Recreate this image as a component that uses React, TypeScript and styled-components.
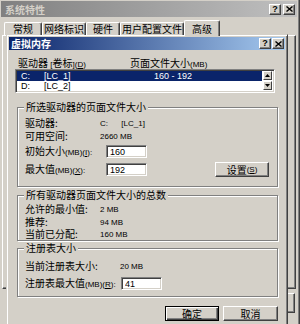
import React from 'react';
import styled, { createGlobalStyle } from 'styled-components';

const FACE = '#d4d0c8';
const SHADOW = '#808080';
const DARK = '#404040';

const GlobalStyle = createGlobalStyle`
  html, body { margin: 0; padding: 0; background: ${FACE}; }
  body {
    font-family: "Noto Sans CJK SC", "Liberation Sans", sans-serif;
    font-size: 10px;
    color: #000;
  }
`;

const Screen = styled.div`
  position: relative;
  width: 300px;
  height: 324px;
  overflow: hidden;
  background: ${FACE};
  display: flex;
  flex-direction: column;
  box-sizing: border-box;
  border-right: 1px solid ${DARK};
  box-shadow: inset -1px 0 0 ${SHADOW};
`;

const TitleBar = styled.div<{ $active?: boolean }>`
  display: flex;
  align-items: center;
  height: ${p => (p.$active ? 13 : 16)}px;
  padding: 0 1px 0 ${p => (p.$active ? 2 : 4)}px;
  background: ${p =>
    p.$active
      ? 'linear-gradient(90deg, #0a246a, #a6caf0)'
      : 'linear-gradient(90deg, #808080, #c0c0c0)'};
  color: ${p => (p.$active ? '#fff' : '#d4d0c8')};
  font-weight: bold;
  line-height: 13px;
`;

const OuterTitle = styled(TitleBar)`
  margin: 1px 2px 0 1px;
`;

const TitleText = styled.span`
  flex: 1;
  white-space: nowrap;
`;

const CaptionButton = styled.div<{ $gap?: number }>`
  width: 12px;
  height: 11px;
  margin-left: ${p => p.$gap ?? 1}px;
  box-sizing: border-box;
  background: ${FACE};
  border: 1px solid;
  border-color: #fff ${DARK} ${DARK} #fff;
  box-shadow: inset -1px -1px 0 ${SHADOW};
  display: flex;
  align-items: center;
  justify-content: center;
  font-family: "Liberation Sans", sans-serif;
  font-size: 9px;
  font-weight: bold;
  color: #000;
  line-height: 9px;
`;

const TabStrip = styled.div`
  display: flex;
  align-items: flex-end;
  height: 15px;
  margin-top: 3px;
  padding-left: 4px;
`;

const Tab = styled.div<{ $w: number; $active?: boolean }>`
  position: relative;
  width: ${p => p.$w}px;
  height: ${p => (p.$active ? 16 : 13)}px;
  margin-bottom: ${p => (p.$active ? -1 : 0)}px;
  box-sizing: border-box;
  background: ${FACE};
  border-top: 1px solid #fff;
  border-left: 1px solid #fff;
  border-right: 1px solid ${DARK};
  border-radius: 2px 2px 0 0;
  box-shadow: inset -1px 0 0 ${SHADOW};
  display: flex;
  align-items: center;
  justify-content: center;
  white-space: nowrap;
  line-height: 12px;
  z-index: ${p => (p.$active ? 2 : 1)};
`;

const TabPanel = styled.div`
  height: 254px;
  margin: 0 3px 0 2px;
  box-sizing: border-box;
  border: 1px solid;
  border-color: #fff ${DARK} ${DARK} #fff;
  box-shadow: inset -1px -1px 0 ${SHADOW};
`;

const OuterButtons = styled.div`
  display: flex;
  justify-content: flex-end;
  padding: 4px 4px 0 0;
`;

const PushButton = styled.div<{ $w: number; $default?: boolean }>`
  width: ${p => p.$w}px;
  height: 15px;
  box-sizing: border-box;
  background: ${FACE};
  border: 1px solid;
  border-color: ${p => (p.$default ? '#000' : `#fff ${DARK} ${DARK} #fff`)};
  box-shadow: ${p =>
    p.$default
      ? `inset 1px 1px 0 #fff, inset -1px -1px 0 ${DARK}, inset -2px -2px 0 ${SHADOW}`
      : `inset -1px -1px 0 ${SHADOW}`};
  display: flex;
  align-items: center;
  justify-content: center;
  white-space: nowrap;
  line-height: 12px;
`;

const OuterPushButton = styled(PushButton)`
  height: 20px;
`;

const Dialog = styled.div`
  position: absolute;
  left: 6px;
  top: 34px;
  width: 282px;
  height: 300px;
  box-sizing: border-box;
  padding: 2px;
  background: ${FACE};
  border: 1px solid;
  border-color: ${FACE} ${DARK} ${DARK} ${FACE};
  box-shadow: inset 1px 1px 0 #fff, inset -1px -1px 0 ${SHADOW};
`;

const Content = styled.div`
  display: flex;
  flex-direction: column;
  padding: 7px 7px 0 6px;
`;

const Latin = styled.span`
  font-family: "Liberation Sans", sans-serif;
  font-size: 8px;
`;

const HeaderRow = styled.div`
  display: grid;
  grid-template-columns: 112px 1fr;
  height: 12px;
  padding-left: 3px;
  line-height: 12px;
  white-space: nowrap;
`;

const ListBox = styled.div`
  display: flex;
  width: 260px;
  height: 24px;
  box-sizing: border-box;
  background: #fff;
  border: 1px solid;
  border-color: ${SHADOW} #fff #fff ${SHADOW};
  box-shadow: inset 1px 1px 0 ${DARK}, inset -1px -1px 0 ${FACE};
  padding: 1px 2px 1px 1px;
`;

const ListRows = styled.div`
  flex: 1;
  display: flex;
  flex-direction: column;
`;

const ListRow = styled.div<{ $selected?: boolean }>`
  display: grid;
  grid-template-columns: 23px 110px 1fr;
  height: 10px;
  padding-left: 4px;
  line-height: 10px;
  font-family: "Liberation Sans", sans-serif;
  font-size: 9px;
  background: ${p => (p.$selected ? '#0a246a' : 'transparent')};
  color: ${p => (p.$selected ? '#fff' : '#000')};
`;

const ScrollColumn = styled.div`
  width: 9px;
  display: flex;
  flex-direction: column;
  gap: 1px;
  margin-left: 1px;
`;

const ScrollButton = styled.div`
  height: 9px;
  box-sizing: border-box;
  background: ${FACE};
  border: 1px solid;
  border-color: #fff ${DARK} ${DARK} #fff;
  display: flex;
  align-items: center;
  justify-content: center;
`;

const Group = styled.div<{ $mt: number; $pt: number; $pb: number }>`
  position: relative;
  margin: ${p => p.$mt}px 0 0 2px;
  padding: ${p => p.$pt}px 0 ${p => p.$pb}px 7px;
  border: 1px solid ${SHADOW};
  box-shadow: inset 1px 1px 0 #fff, 1px 1px 0 #fff;
`;

const Legend = styled.span`
  position: absolute;
  left: 6px;
  top: -7px;
  padding: 0 2px;
  background: ${FACE};
  line-height: 12px;
  white-space: nowrap;
`;

const Row = styled.div<{ $h: number; $mt?: number }>`
  display: flex;
  align-items: center;
  height: ${p => p.$h}px;
  margin-top: ${p => p.$mt ?? 0}px;
  line-height: 11px;
`;

const Label = styled.span<{ $w: number }>`
  width: ${p => p.$w}px;
  flex: none;
  white-space: nowrap;
`;

const Value = styled.span`
  white-space: nowrap;
`;

const Field = styled.input`
  width: 41px;
  height: 13px;
  box-sizing: border-box;
  margin: 0;
  padding: 0 0 0 3px;
  background: #fff;
  border: 1px solid;
  border-color: ${SHADOW} #fff #fff ${SHADOW};
  box-shadow: inset 1px 1px 0 ${DARK}, inset -1px -1px 0 ${FACE};
  font-family: "Liberation Sans", sans-serif;
  font-size: 9px;
  color: #000;
  outline: none;
`;

const SetButton = styled(PushButton)`
  margin: 0 8px 0 auto;
`;

const ButtonRow = styled.div`
  display: flex;
  justify-content: flex-end;
  gap: 4px;
  margin-top: 9px;
`;

const CloseGlyph = () => (
  <svg width="7" height="6" viewBox="0 0 7 6">
    <path d="M0.5 0.5 L6.5 5.5 M6.5 0.5 L0.5 5.5" stroke="#000" strokeWidth="1.4" />
  </svg>
);

const Arrow = ({ up }: { up?: boolean }) => (
  <svg width="5" height="3" viewBox="0 0 5 3">
    <path d={up ? 'M0 3 L2.5 0 L5 3 Z' : 'M0 0 L5 0 L2.5 3 Z'} fill="#000" />
  </svg>
);

const tabs = [
  { label: '常规', w: 38 },
  { label: '网络标识', w: 44 },
  { label: '硬件', w: 34 },
  { label: '用户配置文件', w: 64 },
  { label: '高级', w: 36, active: true },
];

export default function App() {
  return (
    <>
      <GlobalStyle />
      <Screen>
        <OuterTitle>
          <TitleText>系统特性</TitleText>
          <CaptionButton>?</CaptionButton>
          <CaptionButton $gap={2}><CloseGlyph /></CaptionButton>
          <span style={{ width: 1 }} />
        </OuterTitle>
        <TabStrip>
          {tabs.map(t => (
            <Tab key={t.label} $w={t.w} $active={t.active}>{t.label}</Tab>
          ))}
        </TabStrip>
        <TabPanel />
        <OuterButtons>
          <OuterPushButton $w={60}>应用</OuterPushButton>
        </OuterButtons>

        <Dialog>
          <TitleBar $active>
            <TitleText>虚拟内存</TitleText>
            <CaptionButton>?</CaptionButton>
            <CaptionButton><CloseGlyph /></CaptionButton>
          </TitleBar>
          <Content>
            <HeaderRow>
              <span>驱动器 <Latin>[</Latin>卷标<Latin>](<u>D</u>)</Latin></span>
              <span>页面文件大小<Latin>(MB)</Latin></span>
            </HeaderRow>
            <ListBox>
              <ListRows>
                <ListRow $selected>
                  <span>C:</span>
                  <span>[LC_1]</span>
                  <span>160 - 192</span>
                </ListRow>
                <ListRow>
                  <span>D:</span>
                  <span>[LC_2]</span>
                  <span />
                </ListRow>
              </ListRows>
              <ScrollColumn>
                <ScrollButton><Arrow up /></ScrollButton>
                <ScrollButton><Arrow /></ScrollButton>
              </ScrollColumn>
            </ListBox>

            <Group $mt={14} $pt={8} $pb={9}>
              <Legend>所选驱动器的页面文件大小</Legend>
              <Row $h={13}>
                <Label $w={75}>驱动器:</Label>
                <Value><Latin>C:&nbsp;&nbsp;&nbsp;&nbsp;&nbsp;&nbsp;[LC_1]</Latin></Value>
              </Row>
              <Row $h={13}>
                <Label $w={75}>可用空间:</Label>
                <Value><Latin>2660 MB</Latin></Value>
              </Row>
              <Row $h={15} $mt={2}>
                <Label $w={81}>初始大小<Latin>(MB)(<u>I</u>):</Latin></Label>
                <Field readOnly value="160" />
              </Row>
              <Row $h={15} $mt={3}>
                <Label $w={81}>最大值<Latin>(MB)(<u>X</u>):</Latin></Label>
                <Field readOnly value="192" />
                <SetButton $w={54}>设置<Latin>(<u>S</u>)</Latin></SetButton>
              </Row>
            </Group>

            <Group $mt={8} $pt={6} $pb={0}>
              <Legend>所有驱动器页面文件大小的总数</Legend>
              <Row $h={13}>
                <Label $w={75}>允许的最小值:</Label>
                <Value><Latin>2 MB</Latin></Value>
              </Row>
              <Row $h={12}>
                <Label $w={75}>推荐:</Label>
                <Value><Latin>94 MB</Latin></Value>
              </Row>
              <Row $h={13}>
                <Label $w={75}>当前已分配:</Label>
                <Value><Latin>160 MB</Latin></Value>
              </Row>
            </Group>

            <Group $mt={7} $pt={10} $pb={5}>
              <Legend>注册表大小</Legend>
              <Row $h={13}>
                <Label $w={95}>当前注册表大小:</Label>
                <Value><Latin>20 MB</Latin></Value>
              </Row>
              <Row $h={15} $mt={4}>
                <Label $w={96}>注册表最大值<Latin>(MB)(<u>R</u>):</Latin></Label>
                <Field readOnly value="41" />
              </Row>
            </Group>

            <ButtonRow>
              <PushButton $w={54} $default>确定</PushButton>
              <PushButton $w={55}>取消</PushButton>
            </ButtonRow>
          </Content>
        </Dialog>
      </Screen>
    </>
  );
}
